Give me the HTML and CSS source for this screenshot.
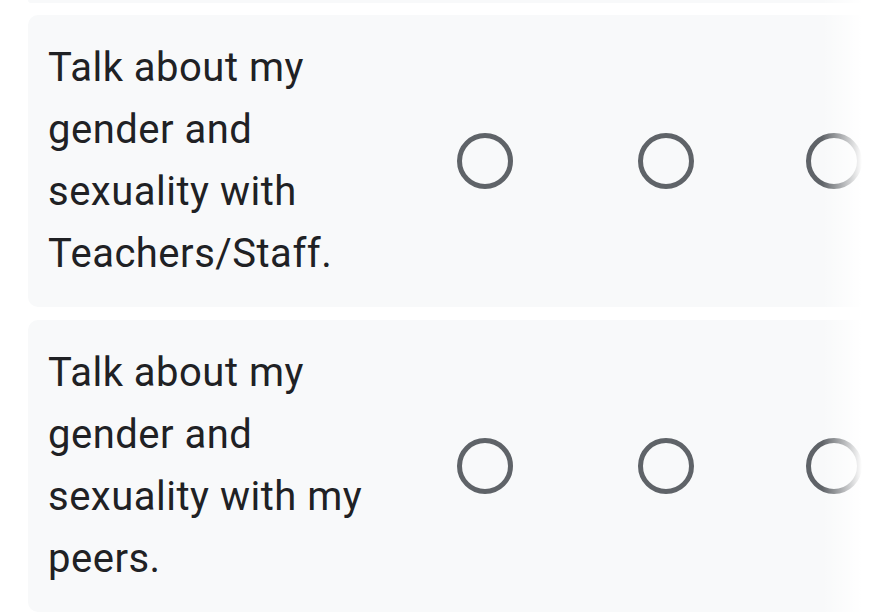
FILE: index.html
```html
<!DOCTYPE html>
<html lang="en">
<head>
    <meta charset="UTF-8">
    <meta name="viewport" content="width=device-width, initial-scale=1.0">
    <title>Grid question</title>
    <link rel="stylesheet" href="styles.css">
</head>
<body>
    <div class="grid">
        <div class="row-end"></div>

        <div class="row">
            <div class="row-label">Talk about my gender and sexuality with Teachers/Staff.</div>
            <div class="cell"><span class="radio"></span></div>
            <div class="cell"><span class="radio"></span></div>
            <div class="cell"><span class="radio"></span></div>
        </div>

        <div class="row">
            <div class="row-label">Talk about my gender and sexuality with my peers.</div>
            <div class="cell"><span class="radio"></span></div>
            <div class="cell"><span class="radio"></span></div>
            <div class="cell"><span class="radio"></span></div>
        </div>

        <!-- horizontal scroll fade -->
        <div class="fade"></div>
    </div>
</body>
</html>
```

FILE: styles.css
```css
body {
    margin: 0;
    background-color: #fff;
    font-family: Roboto, 'Noto Sans', Arial, sans-serif;
    color: #202124;
    overflow: hidden;
}
.grid {
    position: relative;
    display: flex;
    flex-direction: column;
    gap: 12px;
    padding-left: 28px;
    width: 900px;
}
.row-end {
    height: 3px;
    background-color: #f8f9fa;
    border-radius: 0 0 10px 10px;
}
.row {
    display: flex;
    align-items: center;
    height: 292px;
    background-color: #f8f9fa;
    border-radius: 10px;
}
.row + .row {
    margin-top: 1px;
}
.row-label {
    box-sizing: border-box;
    width: 366px;
    flex-shrink: 0;
    padding: 0 20px;
    font-size: 40px;
    letter-spacing: 0.5px;
    line-height: 62px;
}
.cell {
    display: flex;
    justify-content: center;
    width: 181px;
    flex-shrink: 0;
}
.cell:last-child {
    width: 156px;
}
.radio {
    box-sizing: border-box;
    width: 56px;
    height: 56px;
    border: 5.5px solid #5f6368;
    border-radius: 50%;
}
.fade {
    position: absolute;
    top: 0;
    bottom: 0;
    left: 822px;
    width: 80px;
    background: linear-gradient(to right, rgba(255, 255, 255, 0) 0, #fff 40px);
}
```
